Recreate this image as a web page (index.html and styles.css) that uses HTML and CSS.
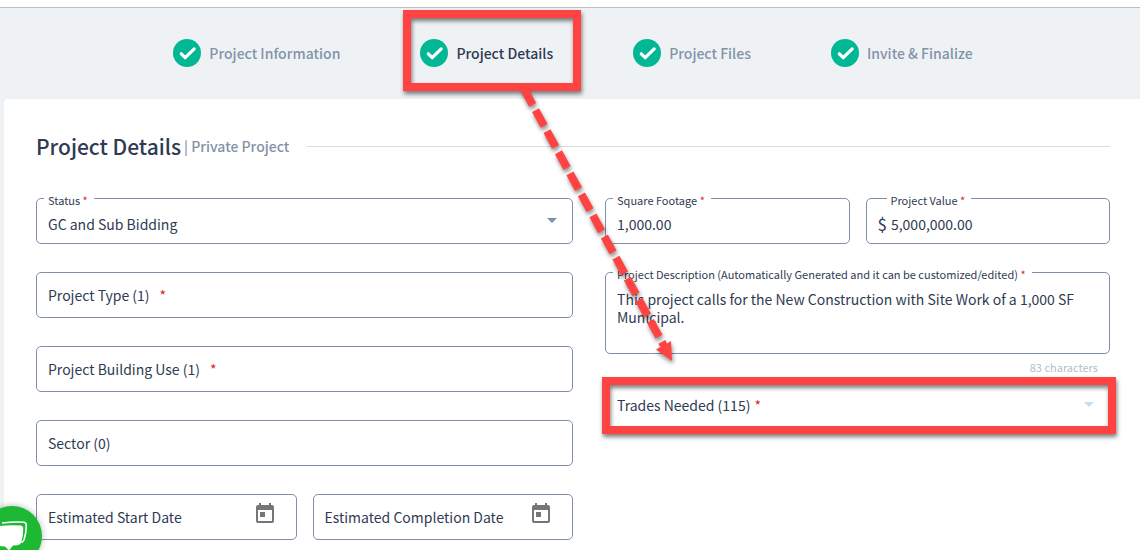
FILE: index.html
```html
<!DOCTYPE html>
<html lang="en">
<head>
<meta charset="utf-8">
<meta name="viewport" content="width=device-width, initial-scale=1">
<title>Project Details</title>
<link rel="stylesheet" href="styles.css">
</head>
<body>
<svg class="defs" width="0" height="0" aria-hidden="true">
  <symbol id="check" viewBox="0 0 28 28"><circle cx="14" cy="14" r="14" fill="#02b894"/><path d="M8.3 14.8l3.9 3.9 9-8.8" fill="none" stroke="#fff" stroke-width="3.2" stroke-linecap="round" stroke-linejoin="round"/></symbol>
  <symbol id="calendar" viewBox="0 0 18 20"><path d="M3 0h2v2h8V0h2v2h1a2 2 0 0 1 2 2v14a2 2 0 0 1-2 2H2a2 2 0 0 1-2-2V4a2 2 0 0 1 2-2h1zM2 7v11h14V7zM4 9h5v5H4z" fill="#757575" fill-rule="evenodd"/></symbol>
</svg>
<div class="topbar"></div>
<nav class="steps" aria-label="Project steps">
  <a class="step" href="#information"><svg class="step-icon"><use href="#check"/></svg>Project Information</a>
  <a class="step step-current" href="#details" aria-current="step"><svg class="step-icon"><use href="#check"/></svg>Project Details<span class="callout callout-step"></span></a>
  <a class="step" href="#files"><svg class="step-icon"><use href="#check"/></svg>Project Files</a>
  <a class="step" href="#invite"><svg class="step-icon"><use href="#check"/></svg>Invite &amp; Finalize</a>
</nav>
<main class="card">
  <header class="heading">
    <h1 class="title">Project Details</h1>
    <span class="subtitle">| Private Project</span>
    <span class="rule"></span>
  </header>
  <form class="form">
    <div class="column column-left">
      <div class="field field-raised">
        <label class="label" for="status">Status <span class="required">*</span></label>
        <select class="control" id="status"><option>GC and Sub Bidding</option></select>
        <span class="caret"></span>
      </div>
      <button class="field picker" type="button">Project Type (1) <span class="required required-wide">*</span></button>
      <button class="field picker" type="button">Project Building Use (1) <span class="required required-wide">*</span></button>
      <button class="field picker" type="button">Sector (0)</button>
      <div class="row">
        <div class="field">
          <input class="control" type="text" placeholder="Estimated Start Date" aria-label="Estimated Start Date">
          <button class="date-button" type="button" aria-label="Choose start date"><svg class="date-icon"><use href="#calendar"/></svg></button>
        </div>
        <div class="field">
          <input class="control" type="text" placeholder="Estimated Completion Date" aria-label="Estimated Completion Date">
          <button class="date-button" type="button" aria-label="Choose completion date"><svg class="date-icon"><use href="#calendar"/></svg></button>
        </div>
      </div>
    </div>
    <div class="column column-right">
      <div class="row">
        <div class="field field-raised">
          <label class="label" for="footage">Square Footage <span class="required">*</span></label>
          <input class="control" id="footage" type="text" value="1,000.00">
        </div>
        <div class="field field-raised">
          <label class="label label-indent" for="value">Project Value <span class="required">*</span></label>
          <span class="currency">$</span>
          <input class="control" id="value" type="text" value="5,000,000.00">
        </div>
      </div>
      <div class="description">
        <div class="field field-area">
          <label class="label" for="description">Project Description (Automatically Generated and it can be customized/edited) <span class="required">*</span></label>
          <textarea class="control area" id="description" rows="3">This project calls for the New Construction with Site Work of a 1,000 SF Municipal.</textarea>
        </div>
        <span class="hint">83 characters</span>
        <button class="field picker" type="button">Trades Needed (115) <span class="required">*</span><span class="caret caret-light"></span><span class="callout callout-trades"></span></button>
      </div>
    </div>
  </form>
</main>
<svg class="arrow" viewBox="0 0 240 380" aria-hidden="true">
  <path d="M24 89L163 344" fill="none" stroke="#ff4343" stroke-width="8" stroke-dasharray="18 6"/>
  <path d="M172 361L156 349.500L160.500 347L159.500 344L165 341L167 343.500L171 341z" fill="#ff4343"/>
</svg>
<button class="chat" type="button" aria-label="Open chat">
  <svg class="chat-icon" viewBox="0 0 60 60" aria-hidden="true">
    <path d="M20 17Q33 15.500 42 16.300Q44.500 16.700 44.300 20Q44 28 42 34Q41 36 39.500 36.500" fill="none" stroke="#fff" stroke-width="1.600"/>
    <path d="M12 22Q13 20.500 17 20Q29 18.800 38.500 19.600Q41.300 20 41.200 23Q41 31 39.500 36Q38.700 38.800 35.500 39.200L31 39.500L27 44.500L23 40.500L16 40Q13 39.500 12.500 36Q11 29 12 22z" fill="#fff"/>
  </svg>
</button>
</body>
</html>
```
FILE: styles.css
```css
* { box-sizing: border-box; }

body {
  display: flex;
  flex-direction: column;
  min-height: 100vh;
  margin: 0;
  position: relative;
  overflow-x: hidden;
  background: #eef2f5;
  color: #2f3b52;
  font: 14px/20px "Noto Sans CJK SC", "Noto Sans", sans-serif;
}

.defs { position: absolute; }

.topbar {
  height: 8px;
  background: #fff;
  border-bottom: 1px solid #bcbfc3;
}

.steps {
  display: flex;
  justify-content: center;
  gap: 80px;
  padding: 31px 0 32px 6px;
}

.step {
  display: flex;
  align-items: center;
  gap: 8px;
  position: relative;
  color: #8492a9;
  font-weight: 500;
  text-decoration: none;
  white-space: nowrap;
}

.step-current { color: #2f3b52; }
.step-icon { width: 28px; height: 28px; }

.card {
  flex: 1;
  margin-left: 4px;
  padding: 31px 30px 0 32px;
  background: #fff;
  border-radius: 4px 0 0 0;
}

.heading {
  display: flex;
  align-items: center;
  height: 32px;
  margin-bottom: 36px;
}

.title {
  margin: 0 3px 0 0;
  font-size: 21px;
  line-height: 32px;
  font-weight: 500;
}

.subtitle { color: #8492a9; font-weight: 500; }

.rule {
  flex: 1;
  height: 1px;
  margin-left: 18px;
  background: #dcdcdc;
}

.form { display: flex; gap: 32px; }

.column {
  display: flex;
  flex-direction: column;
  gap: 28px;
  min-width: 0;
}

.column-left { flex: 537 1 0; }
.column-right { flex: 505 1 0; }

.row { display: flex; gap: 16px; }
.row > .field { flex: 1 1 0; min-width: 0; }

.field {
  display: flex;
  align-items: center;
  position: relative;
  height: 46px;
  padding: 0 11px;
  border: 1px solid #7f8fa9;
  border-radius: 5px;
  background: #fff;
  color: inherit;
  font: inherit;
}

.field-raised { padding-top: 6px; }

.label {
  position: absolute;
  top: -7px;
  left: 7px;
  padding: 0 6px 0 4px;
  background: #fff;
  font-size: 11px;
  line-height: 16px;
  white-space: nowrap;
}

.label-indent { left: 20px; }

.required { color: #d9252b; }
.required-wide { margin-left: 10px; }
.picker .required:not(.required-wide) { margin-left: 4px; }

.control {
  flex: 1;
  min-width: 0;
  width: 100%;
  margin: 0;
  padding: 0;
  border: 0;
  outline: 0;
  appearance: none;
  background: transparent;
  color: inherit;
  font: inherit;
}

.control::placeholder { color: inherit; opacity: 1; }
.currency { margin-right: 4px; font-size: 17px; }

.caret {
  width: 0;
  height: 0;
  margin: 0 4px 8px auto;
  border: 5px solid transparent;
  border-top-color: #7f8fa9;
  border-bottom: 0;
}

.caret-light {
  margin-bottom: 2px;
  border-top-color: #c7dcf0;
}

.date-button {
  display: flex;
  margin: 0 11px 8px 0;
  padding: 0;
  border: 0;
  background: none;
}

.date-icon { width: 18px; height: 20px; }

.description { display: flex; flex-direction: column; }

.field-area {
  height: auto;
  padding-top: 17px;
  padding-bottom: 9px;
}

.area {
  display: block;
  line-height: 18px;
  resize: none;
}

.hint {
  align-self: flex-end;
  margin: 5px 12px 7px 0;
  color: #b3bdcb;
  font-size: 11px;
  line-height: 16px;
}

.callout {
  position: absolute;
  border: 8px solid #ff4343;
  filter: drop-shadow(1px 3px 2px rgba(0, 0, 0, 0.5));
}

.callout-step { inset: -29px -28px -24px -17px; }
.callout-trades { inset: -6px -7px -7px -4px; }

.arrow {
  position: absolute;
  top: 0;
  left: 500px;
  width: 240px;
  height: 380px;
  pointer-events: none;
  filter: drop-shadow(1px 3px 2px rgba(0, 0, 0, 0.45));
}

.chat {
  position: fixed;
  left: -18px;
  bottom: -16px;
  width: 60px;
  height: 60px;
  padding: 0;
  border: 0;
  border-radius: 50%;
  background: #1db935;
  box-shadow: 0 0 6px rgba(0, 0, 0, 0.3);
}

.chat-icon { display: block; width: 60px; height: 60px; }
```
